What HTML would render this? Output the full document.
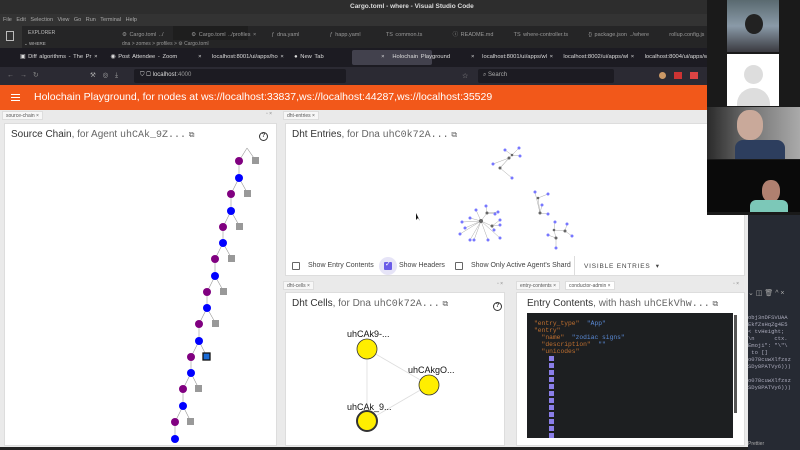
<!DOCTYPE html>
<html><head><meta charset="utf-8"><style>
*{margin:0;padding:0;box-sizing:border-box}
body{width:800px;height:450px;overflow:hidden;background:#1e1e1e;font-family:"Liberation Sans",sans-serif;position:relative}
.a{position:absolute;white-space:nowrap}
.t{font-size:6px;color:#ccc}
.ptab{position:absolute;height:9px;background:#f7f7f7;border:1px solid #ddd;font-size:5px;color:#555;padding:1px 3px}
.panel{position:absolute;background:#fff;border:1px solid #ddd}
.h{font-size:10px;color:#333}
.h span{color:#666}
.m{font-family:"Liberation Mono",monospace;color:#555}
.cb{position:absolute;width:8px;height:8px;border:1.3px solid #666;border-radius:1px}
.lbl{position:absolute;font-size:7px;color:#444;white-space:nowrap}
</style></head><body>
<!-- title bar -->
<div class="a" style="left:0;top:0;width:707px;height:14px;background:#2d2d2d"></div>
<div class="a" style="left:350px;top:3px;font-size:6.5px;color:#ddd;font-weight:bold">Cargo.toml - where - Visual Studio Code</div>
<div class="a" style="left:0;top:14px;width:707px;height:12px;background:#333"></div>
<div class="a t" style="left:3px;top:17px;color:#aaa;font-size:5.5px;word-spacing:3px">File Edit Selection View Go Run Terminal Help</div>
<div class="a" style="left:0;top:26px;width:707px;height:22px;background:#252526"></div>
<div class="a" style="left:0;top:26px;width:22px;height:22px;background:#333"></div>
<div class="a" style="left:6px;top:31px;width:8px;height:10px;border:1.3px solid #bbb"></div>
<div class="a t" style="left:28px;top:30px;font-size:5px;color:#bbb">EXPLORER</div>
<div class="a t" style="left:24px;top:41px;font-size:4.5px;color:#bbb">⌄ WHERE</div>
<div class="a" style="left:173px;top:26px;width:75px;height:14px;background:#1e1e1e"></div>
<div class="a t" style="left:122px;top:30px;font-size:5.5px;color:#999;word-spacing:1px">⚙ Cargo.toml ../&nbsp;&nbsp;&nbsp;&nbsp;&nbsp;&nbsp;&nbsp;&nbsp;&nbsp;&nbsp;&nbsp;⚙ Cargo.toml ../profiles ×&nbsp;&nbsp;&nbsp;&nbsp;&nbsp;&nbsp;ƒ dna.yaml&nbsp;&nbsp;&nbsp;&nbsp;&nbsp;&nbsp;&nbsp;&nbsp;&nbsp;&nbsp;&nbsp;&nbsp;ƒ happ.yaml&nbsp;&nbsp;&nbsp;&nbsp;&nbsp;&nbsp;&nbsp;&nbsp;&nbsp;&nbsp;TS common.ts&nbsp;&nbsp;&nbsp;&nbsp;&nbsp;&nbsp;&nbsp;&nbsp;&nbsp;&nbsp;&nbsp;&nbsp;ⓘ README.md&nbsp;&nbsp;&nbsp;&nbsp;&nbsp;&nbsp;&nbsp;&nbsp;TS where-controller.ts&nbsp;&nbsp;&nbsp;&nbsp;&nbsp;&nbsp;&nbsp;&nbsp;{} package.json ../where&nbsp;&nbsp;&nbsp;&nbsp;&nbsp;&nbsp;&nbsp;&nbsp;rollup.config.js&nbsp;&nbsp;&nbsp;&nbsp;&nbsp;&nbsp;&nbsp;TS where.serv</div>
<div class="a t" style="left:122px;top:41px;font-size:5px;color:#999">dna &gt; zomes &gt; profiles &gt; ⚙ Cargo.toml</div>
<!-- browser tabs -->
<div class="a" style="left:0;top:48px;width:707px;height:19px;background:#1c1b22"></div>
<div class="a" style="left:352px;top:50px;width:80px;height:15px;background:#42414d;border-radius:2px"></div>
<div class="a t" style="left:20px;top:54px;font-size:5.8px;color:#ddd;word-spacing:1px">▣ Diff algorithms - The Pr ×&nbsp;&nbsp;&nbsp;&nbsp;&nbsp;◉ Post Attendee - Zoom&nbsp;&nbsp;&nbsp;&nbsp;&nbsp;&nbsp;&nbsp;&nbsp;×&nbsp;&nbsp;&nbsp;&nbsp;localhost:8001/ui/apps/ho ×&nbsp;&nbsp;&nbsp;&nbsp;● New Tab&nbsp;&nbsp;&nbsp;&nbsp;&nbsp;&nbsp;&nbsp;&nbsp;&nbsp;&nbsp;&nbsp;&nbsp;&nbsp;&nbsp;&nbsp;&nbsp;&nbsp;&nbsp;&nbsp;&nbsp;&nbsp;&nbsp;×&nbsp;&nbsp;&nbsp;Holochain Playground&nbsp;&nbsp;&nbsp;&nbsp;&nbsp;&nbsp;&nbsp;&nbsp;×&nbsp;&nbsp;&nbsp;localhost:8001/ui/apps/wl ×&nbsp;&nbsp;&nbsp;&nbsp;localhost:8002/ui/apps/wl ×&nbsp;&nbsp;&nbsp;&nbsp;localhost:8004/ui/apps/wl ×&nbsp;&nbsp;&nbsp;&nbsp;+</div>
<div class="a" style="left:0;top:67px;width:707px;height:18px;background:#2b2a33"></div>
<div class="a t" style="left:7px;top:71px;font-size:7px;color:#888;word-spacing:4px">← → ↻</div>
<div class="a t" style="left:90px;top:71px;font-size:6.5px;color:#aaa;word-spacing:5px">⚒ ◎ ⤓</div>
<div class="a" style="left:134px;top:69px;width:212px;height:14px;background:#1c1b22;border-radius:2px"></div>
<div class="a t" style="left:140px;top:72px;font-size:6px;color:#ddd">⛉ ▢ localhost<span style="color:#999">:4000</span></div>
<div class="a t" style="left:462px;top:72px;font-size:7px;color:#999">☆</div>
<div class="a" style="left:478px;top:69px;width:136px;height:14px;background:#1c1b22;border-radius:2px"></div>
<div class="a t" style="left:483px;top:72px;font-size:6px;color:#aaa">⌕ Search</div>
<div class="a" style="left:659px;top:72px;width:7px;height:7px;border-radius:50%;background:#c96"></div>
<div class="a" style="left:674px;top:72px;width:8px;height:7px;background:#c33"></div>
<div class="a" style="left:690px;top:72px;width:8px;height:7px;background:#d44"></div>
<!-- orange header -->
<div class="a" style="left:0;top:85px;width:707px;height:25px;background:#f2581a"></div>
<div class="a" style="left:11px;top:94px;width:9px;height:1.3px;background:#fff;box-shadow:0 3px #fff,0 6px #fff"></div>
<div class="a" style="left:34px;top:91px;font-size:10.5px;color:#fff">Holochain Playground, for nodes at ws://localhost:33837,ws://localhost:44287,ws://localhost:35529</div>
<!-- page area -->
<div class="a" style="left:0;top:110px;width:748px;height:337px;background:#eaeaea"></div>
<div class="a" style="left:0;top:447px;width:748px;height:3px;background:#222"></div>
<div class="ptab" style="left:2px;top:111px">source-chain ×</div>
<div class="a" style="left:266px;top:111px;font-size:5px;color:#888">▫ ×</div>
<div class="ptab" style="left:283px;top:111px">dht-entries ×</div>
<div class="ptab" style="left:283px;top:281px">dht-cells ×</div>
<div class="a" style="left:497px;top:281px;font-size:5px;color:#888">▫ ×</div>
<div class="ptab" style="left:516px;top:281px">entry-contents ×</div>
<div class="ptab" style="left:565px;top:281px;background:#fff">conductor-admin ×</div>
<div class="a" style="left:733px;top:281px;font-size:5px;color:#888">▫ ×</div>
<!-- source chain -->
<div class="panel" style="left:4px;top:123px;width:273px;height:323px"></div>
<div class="a h" style="left:11px;top:129px">Source Chain<span>, for Agent </span><span class="m">uhCAk_9Z...</span> <span style="font-size:8px">⧉</span></div>
<div class="a" style="left:259px;top:132px;width:9px;height:9px;border:1.2px solid #333;border-radius:50%;font-size:6px;text-align:center;line-height:7px;color:#333;font-weight:bold">?</div>
<svg class="a" style="left:0;top:0" width="800" height="450">
<g stroke="#999" stroke-width="0.6">
<line x1="247" y1="148" x2="239" y2="161"/><line x1="247" y1="148" x2="256" y2="161"/>
<line x1="239" y1="161" x2="239" y2="178"/><line x1="239" y1="178" x2="231" y2="194"/><line x1="239" y1="178" x2="248" y2="194"/>
<line x1="231" y1="194" x2="231" y2="211"/><line x1="231" y1="211" x2="223" y2="227"/><line x1="231" y1="211" x2="240" y2="227"/>
<line x1="223" y1="227" x2="223" y2="243"/><line x1="223" y1="243" x2="215" y2="259"/><line x1="223" y1="243" x2="232" y2="259"/>
<line x1="215" y1="259" x2="215" y2="276"/><line x1="215" y1="276" x2="207" y2="292"/><line x1="215" y1="276" x2="224" y2="292"/>
<line x1="207" y1="292" x2="207" y2="308"/><line x1="207" y1="308" x2="199" y2="324"/><line x1="207" y1="308" x2="216" y2="324"/>
<line x1="199" y1="324" x2="199" y2="341"/><line x1="199" y1="341" x2="191" y2="357"/><line x1="199" y1="341" x2="207" y2="357"/>
<line x1="191" y1="357" x2="191" y2="373"/><line x1="191" y1="373" x2="183" y2="389"/><line x1="191" y1="373" x2="199" y2="389"/>
<line x1="183" y1="389" x2="183" y2="406"/><line x1="183" y1="406" x2="175" y2="422"/><line x1="183" y1="406" x2="191" y2="422"/>
<line x1="175" y1="422" x2="175" y2="439"/>
</g>
<g fill="#800080"><circle cx="239" cy="161" r="4"/><circle cx="231" cy="194" r="4"/><circle cx="223" cy="227" r="4"/><circle cx="215" cy="259" r="4"/><circle cx="207" cy="292" r="4"/><circle cx="199" cy="324" r="4"/><circle cx="191" cy="357" r="4"/><circle cx="183" cy="389" r="4"/><circle cx="175" cy="422" r="4"/></g>
<g fill="#0000ff"><circle cx="239" cy="178" r="4"/><circle cx="231" cy="211" r="4"/><circle cx="223" cy="243" r="4"/><circle cx="215" cy="276" r="4"/><circle cx="207" cy="308" r="4"/><circle cx="199" cy="341" r="4"/><circle cx="191" cy="373" r="4"/><circle cx="183" cy="406" r="4"/><circle cx="175" cy="439" r="4"/></g>
<g fill="#999"><rect x="252" y="157" width="7" height="7"/><rect x="244" y="190" width="7" height="7"/><rect x="236" y="223" width="7" height="7"/><rect x="228" y="255" width="7" height="7"/><rect x="220" y="288" width="7" height="7"/><rect x="212" y="320" width="7" height="7"/><rect x="195" y="385" width="7" height="7"/><rect x="187" y="418" width="7" height="7"/></g>
<rect x="203" y="353" width="7" height="7" fill="#1a6bd6" stroke="#111" stroke-width="1.3"/>
</svg>
<!-- dht entries -->
<div class="panel" style="left:285px;top:123px;width:460px;height:153px"></div>
<div class="a h" style="left:292px;top:129px">Dht Entries<span>, for Dna </span><span class="m">uhC0k72A...</span> <span style="font-size:8px">⧉</span></div>
<svg class="a" style="left:0;top:0" width="800" height="450">
<g stroke="#aaa" stroke-width="0.5" fill="none">
<path d="M509 158L493 164M500 168L512 155L520 156M512 155L505 150M500 168L512 178M509 158L500 168M512 155L519 148"/>
<path d="M481 221L476 210M481 221L470 218M481 221L487 213L495 214M481 221L465 228M481 221L470 240M481 221L492 226L500 220M481 221L488 240M481 221L474 240M481 221L500 238M492 226L494 230M487 213L498 212M492 226L500 225M481 221L462 222M481 221L460 234M487 213L486 206"/>
<path d="M540 213L538 198L548 194M540 213L542 205M540 213L548 214M540 213L535 192"/>
<path d="M556 238L554 230L565 231L567 224M556 238L548 235M556 238L556 248M565 231L572 236M554 230L555 222"/>
</g>
<g fill="#77f">
<circle cx="519" cy="148" r="1.5"/><circle cx="505" cy="150" r="1.5"/><circle cx="520" cy="156" r="1.5"/><circle cx="493" cy="164" r="1.5"/><circle cx="512" cy="178" r="1.5"/>
<circle cx="476" cy="210" r="1.5"/><circle cx="486" cy="206" r="1.5"/><circle cx="495" cy="214" r="1.5"/><circle cx="470" cy="218" r="1.5"/><circle cx="462" cy="222" r="1.5"/><circle cx="465" cy="228" r="1.5"/><circle cx="460" cy="234" r="1.5"/><circle cx="470" cy="240" r="1.5"/><circle cx="488" cy="240" r="1.5"/><circle cx="474" cy="240" r="1.5"/><circle cx="494" cy="230" r="1.5"/><circle cx="500" cy="238" r="1.5"/><circle cx="500" cy="220" r="1.5"/><circle cx="500" cy="225" r="1.5"/><circle cx="498" cy="212" r="1.5"/>
<circle cx="535" cy="192" r="1.5"/><circle cx="548" cy="194" r="1.5"/><circle cx="542" cy="205" r="1.5"/><circle cx="548" cy="214" r="1.5"/>
<circle cx="548" cy="235" r="1.5"/><circle cx="555" cy="222" r="1.5"/><circle cx="567" cy="224" r="1.5"/><circle cx="572" cy="236" r="1.5"/><circle cx="556" cy="248" r="1.5"/>
</g>
<g fill="#666"><circle cx="509" cy="158" r="1.5"/><circle cx="500" cy="168" r="1.5"/><circle cx="512" cy="155" r="1.3"/><circle cx="481" cy="221" r="2"/><circle cx="492" cy="226" r="1.5"/><circle cx="487" cy="213" r="1.5"/><circle cx="540" cy="213" r="1.5"/><circle cx="538" cy="198" r="1.3"/><circle cx="556" cy="238" r="1.5"/><circle cx="565" cy="231" r="1.5"/><circle cx="554" cy="230" r="1.3"/></g>
<path d="M416 213L416 220L418 218L420 221Z" fill="#111"/>
</svg>
<div class="cb" style="left:292px;top:262px"></div>
<div class="lbl" style="left:308px;top:262px">Show Entry Contents</div>
<div class="a" style="left:379px;top:257px;width:18px;height:18px;border-radius:50%;background:#e6e4f7"></div>
<div class="cb" style="left:384px;top:262px;background:#6a5be8;border-color:#6a5be8"></div>
<div class="a" style="left:385px;top:260px;font-size:7px;color:#fff">✓</div>
<div class="lbl" style="left:399px;top:262px">Show Headers</div>
<div class="cb" style="left:455px;top:262px"></div>
<div class="lbl" style="left:471px;top:262px">Show Only Active Agent's Shard</div>
<div class="a" style="left:574px;top:256px;width:1px;height:20px;background:#ddd"></div>
<div class="lbl" style="left:584px;top:262px;letter-spacing:0.8px;font-size:6.5px">VISIBLE ENTRIES&nbsp; ▾</div>
<!-- dht cells -->
<div class="panel" style="left:285px;top:292px;width:220px;height:154px"></div>
<div class="a h" style="left:292px;top:298px">Dht Cells<span>, for Dna </span><span class="m">uhC0k72A...</span> <span style="font-size:8px">⧉</span></div>
<div class="a" style="left:493px;top:302px;width:9px;height:9px;border:1.2px solid #333;border-radius:50%;font-size:6px;text-align:center;line-height:7px;color:#333;font-weight:bold">?</div>
<svg class="a" style="left:0;top:0" width="800" height="450">
<g stroke="#ddd" stroke-width="0.8"><line x1="367" y1="349" x2="429" y2="385"/><line x1="367" y1="349" x2="367" y2="421"/><line x1="367" y1="421" x2="429" y2="385"/></g>
<g fill="#ffee00" stroke="#333"><circle cx="367" cy="349" r="10" stroke-width="0.8"/><circle cx="429" cy="385" r="10" stroke-width="0.8"/><circle cx="367" cy="421" r="10" stroke-width="2"/></g>
<g font-family="Liberation Sans" font-size="9" fill="#111"><text x="347" y="337">uhCAk9-...</text><text x="408" y="373">uhCAkgO...</text><text x="347" y="410">uhCAk_9...</text></g>
</svg>
<!-- entry contents -->
<div class="panel" style="left:516px;top:292px;width:229px;height:154px"></div>
<div class="a h" style="left:527px;top:298px">Entry Contents<span>, with hash </span><span class="m">uhCEkVhw...</span> <span style="font-size:8px">⧉</span></div>
<div class="a" style="left:527px;top:313px;width:206px;height:125px;background:#1d1f21"></div>
<div class="a" style="left:734px;top:315px;width:3px;height:98px;background:#555"></div>
<div class="a" style="left:534px;top:320px;font-family:'Liberation Mono',monospace;font-size:6.3px;line-height:7px;color:#c07030;white-space:pre">"entry_type"  <span style="color:#5a8ad6">"App"</span>
"entry"
  "name"  <span style="color:#5a8ad6">"zodiac signs"</span>
  "description"  <span style="color:#5a8ad6">""</span>
  "unicodes"</div>
<svg class="a" style="left:0;top:0" width="800" height="450"><g fill="#8a7ee8">
<rect x="549" y="356" width="5" height="5"/><rect x="549" y="363" width="5" height="5"/><rect x="549" y="370" width="5" height="5"/><rect x="549" y="377" width="5" height="5"/><rect x="549" y="384" width="5" height="5"/><rect x="549" y="391" width="5" height="5"/><rect x="549" y="398" width="5" height="5"/><rect x="549" y="405" width="5" height="5"/><rect x="549" y="412" width="5" height="5"/><rect x="549" y="419" width="5" height="5"/><rect x="549" y="426" width="5" height="5"/><rect x="549" y="433" width="5" height="5"/></g></svg>
<!-- right side videos -->
<div class="a" style="left:707px;top:0;width:93px;height:215px;background:#1a1a1a"></div>
<div class="a" style="left:727px;top:0;width:52px;height:52px;background:linear-gradient(#5a6a70,#8a9aa8 50%,#3a3a40)"></div>
<div class="a" style="left:745px;top:14px;width:18px;height:20px;border-radius:50%;background:#222"></div>
<div class="a" style="left:727px;top:54px;width:52px;height:52px;background:#fff"></div>
<div class="a" style="left:744px;top:65px;width:19px;height:19px;border-radius:50%;background:#ddd"></div>
<div class="a" style="left:737px;top:88px;width:33px;height:18px;border-radius:16px 16px 0 0;background:#ddd"></div>
<div class="a" style="left:707px;top:107px;width:93px;height:52px;background:linear-gradient(90deg,#2a2a2a,#777 50%,#aaa)"></div>
<div class="a" style="left:737px;top:110px;width:26px;height:30px;border-radius:45%;background:#c9a99a"></div>
<div class="a" style="left:735px;top:140px;width:50px;height:19px;background:#2d3e5e;border-radius:8px 8px 0 0"></div>
<div class="a" style="left:707px;top:160px;width:93px;height:52px;background:#0a0a0a"></div>
<div class="a" style="left:762px;top:180px;width:18px;height:22px;border-radius:45%;background:#b08070"></div>
<div class="a" style="left:750px;top:200px;width:38px;height:12px;background:#7cc8b8;border-radius:6px 6px 0 0"></div>
<!-- dark editor -->
<div class="a" style="left:748px;top:215px;width:52px;height:235px;background:#262a33"></div>
<div class="a" style="left:748px;top:289px;font-size:7px;color:#aaa">⌄ ◫ 🗑 ^ ×</div>
<div class="a" style="left:748px;top:314px;font-family:'Liberation Mono',monospace;font-size:5.5px;line-height:7px;color:#aab;white-space:pre">obj3nDFSVUAA
EkfZsHqZg4E5
&lt; tvHeight;
\n      ctx.
Emoji": "\"\
 to []
o078cuwXlfzsz
SDy8PATVy6)))

o078cuwXlfzsz
SDy8PATVy6)))</div>
<div class="a" style="left:748px;top:441px;font-size:5px;color:#aaa">Prettier</div>
</body></html>
